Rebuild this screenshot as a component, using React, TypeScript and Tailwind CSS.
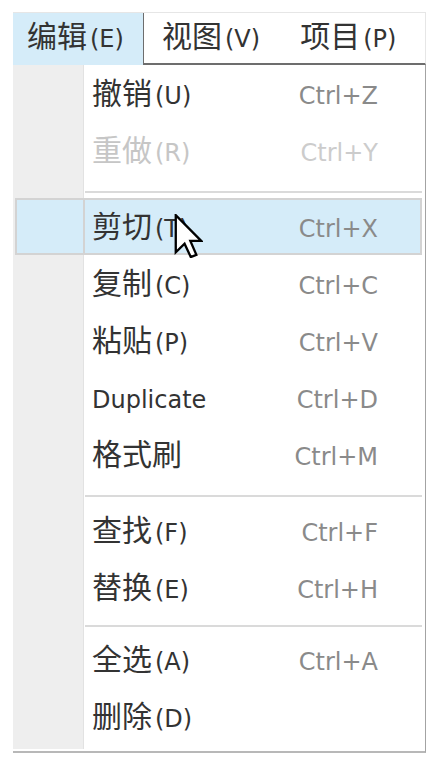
import type { JSX } from "react";

type Item = {
  kind: "item";
  cjk?: string;
  key?: string;
  latin?: string;
  shortcut?: string;
  disabled?: boolean;
  active?: boolean;
};
type Sep = { kind: "sep"; h: string; top: string };
type Row = Item | Sep;

const rows: Row[] = [
  { kind: "item", cjk: "撤销", key: "(U)", shortcut: "Ctrl+Z" },
  { kind: "item", cjk: "重做", key: "(R)", shortcut: "Ctrl+Y", disabled: true },
  { kind: "sep", h: "h-[19px]", top: "pt-[12px]" },
  { kind: "item", cjk: "剪切", key: "(T)", shortcut: "Ctrl+X", active: true },
  { kind: "item", cjk: "复制", key: "(C)", shortcut: "Ctrl+C" },
  { kind: "item", cjk: "粘贴", key: "(P)", shortcut: "Ctrl+V" },
  { kind: "item", latin: "Duplicate", shortcut: "Ctrl+D" },
  { kind: "item", cjk: "格式刷", shortcut: "Ctrl+M" },
  { kind: "sep", h: "h-[19px]", top: "pt-[12px]" },
  { kind: "item", cjk: "查找", key: "(F)", shortcut: "Ctrl+F" },
  { kind: "item", cjk: "替换", key: "(E)", shortcut: "Ctrl+H" },
  { kind: "sep", h: "h-[15px]", top: "pt-[9px]" },
  { kind: "item", cjk: "全选", key: "(A)", shortcut: "Ctrl+A" },
  { kind: "item", cjk: "删除", key: "(D)" },
];

const CJK = "font-['Noto_Sans_CJK_SC',sans-serif] text-[30px] leading-none";
const LAT = "font-['DejaVu_Sans',sans-serif] text-[24px] leading-none";

function Label({ cjk, keyText, latin }: { cjk?: string; keyText?: string; latin?: string }): JSX.Element {
  return (
    <>
      {cjk && <span className={CJK}>{cjk}</span>}
      {keyText && <span className={`ml-[3px] ${LAT}`}>{keyText}</span>}
      {latin && <span className={LAT}>{latin}</span>}
    </>
  );
}

function Cursor(): JSX.Element {
  return (
    <svg width="29" height="44" viewBox="0 0 12 19" className="absolute left-[174px] top-[214px]">
      <path
        d="M0.5 0.5 V16.5 L4.3 12.8 L7 18.6 L9.4 17.6 L6.8 11.6 H11.5 Z"
        fill="#ffffff"
        stroke="#000000"
        strokeWidth="1"
        strokeLinejoin="miter"
      />
    </svg>
  );
}

function Line({ row }: { row: Item }): JSX.Element {
  const color = row.disabled ? "text-[#c6c6c6]" : "text-[#333333]";
  const scColor = row.disabled ? "text-[#cccccc]" : "text-[#8a8a8a]";
  return (
    <div className={`flex flex-1 items-baseline ${color}`}>
      <Label cjk={row.cjk} keyText={row.key} latin={row.latin} />
      {row.shortcut && <span className={`ml-auto ${LAT} ${scColor}`}>{row.shortcut}</span>}
    </div>
  );
}

function MenuRow({ row }: { row: Row }): JSX.Element {
  if (row.kind === "sep") {
    return (
      <div className={`flex ${row.h}`}>
        <div className="w-[71px] bg-[#eeeeee] border-r border-[#e2e2e2]" />
        <div className={`flex-1 ${row.top}`}>
          <div className="h-[2px] ml-[1px] mr-[3px] bg-[#dadada]" />
        </div>
      </div>
    );
  }

  const shift = row.cjk ? "pb-[4px]" : "pt-[4px]";

  if (row.active) {
    return (
      <div className="flex h-[57px]">
        <div className="w-[2px] bg-[#eeeeee]" />
        <div className="flex flex-1 mr-[3px] border-2 border-[#d3d3d3] bg-[#d5ecf9]">
          <div className="w-[68px] border-r-2 border-[#d3d3d3]" />
          <div className={`flex flex-1 items-center pl-[7px] pr-[42px] ${shift}`}>
            <Line row={row} />
          </div>
        </div>
      </div>
    );
  }

  return (
    <div className="flex h-[57px]">
      <div className="w-[71px] bg-[#eeeeee] border-r border-[#e2e2e2]" />
      <div className={`flex flex-1 items-center pl-[8px] pr-[47px] ${shift}`}>
        <Line row={row} />
      </div>
    </div>
  );
}

export default function App(): JSX.Element {
  return (
    <div className="relative w-[436px] h-[761px] bg-white pt-[12px] pl-[13px]">
      {/* Menu bar */}
      <div className="flex w-[413px] h-[53px] border-t border-[#e6e6e6] text-[#333333]">
        <div className="flex w-[130px] items-center pl-[14px] pb-[8px] bg-[#d5ecf9]">
          <span className="flex items-baseline">
            <Label cjk="编辑" keyText="(E)" />
          </span>
        </div>
        <div className="flex flex-1 items-center gap-[40px] pl-[18px] pb-[6px] border-l border-l-[#6d6d6d] border-b-2 border-b-[#6d6d6d] border-r border-r-[#e6e6e6]">
          <span className="flex items-baseline">
            <Label cjk="视图" keyText="(V)" />
          </span>
          <span className="flex items-baseline">
            <Label cjk="项目" keyText="(P)" />
          </span>
        </div>
      </div>

      {/* Dropdown */}
      <div className="w-[413px] border-r border-r-[#a3a3a3] border-b-2 border-b-[#b8b8b8] pb-[2px]">
        {rows.map((r, i) => (
          <MenuRow key={i} row={r} />
        ))}
        <div className="flex h-[4px]">
          <div className="w-[71px] bg-[#eeeeee] border-r border-[#e2e2e2]" />
        </div>
      </div>

      <Cursor />
    </div>
  );
}
